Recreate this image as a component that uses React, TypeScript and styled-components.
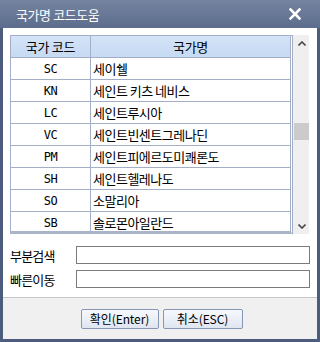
import React from 'react';
import styled, { createGlobalStyle } from 'styled-components';

const GlobalStyle = createGlobalStyle`
  html, body {
    margin: 0;
    padding: 0;
    background: #ffffff;
  }
  * {
    box-sizing: border-box;
  }
`;

const countries = [
  { code: 'SC', name: '세이쉘' },
  { code: 'KN', name: '세인트 키츠 네비스' },
  { code: 'LC', name: '세인트루시아' },
  { code: 'VC', name: '세인트빈센트그레나딘' },
  { code: 'PM', name: '세인트피에르도미쾌론도' },
  { code: 'SH', name: '세인트헬레나도' },
  { code: 'SO', name: '소말리아' },
  { code: 'SB', name: '솔로몬아일란드' },
];

const KR = `"Noto Sans CJK KR", "Noto Sans", sans-serif`;

const App = () => {
  return (
    <>
      <GlobalStyle />
      <Window>
        <TitleBar>
          <Title>국가명 코드도움</Title>
          <CloseButton aria-label="닫기">
            <svg width="12" height="12" viewBox="0 0 12 12">
              <path d="M1.5 1.5 L10.5 10.5 M10.5 1.5 L1.5 10.5" stroke="#ffffff" strokeWidth="2.6" strokeLinecap="square" />
            </svg>
          </CloseButton>
        </TitleBar>
        <Body>
          <ListArea>
            <Grid>
              <HeadRow>
                <HeadCell $width={80}>국가 코드</HeadCell>
                <HeadCell $last>국가명</HeadCell>
              </HeadRow>
              {countries.map((c) => (
                <Row key={c.code}>
                  <CodeCell>{c.code}</CodeCell>
                  <NameCell>{c.name}</NameCell>
                </Row>
              ))}
            </Grid>
            <ScrollBar>
              <ArrowBox>
                <svg width="8" height="5" viewBox="0 0 8 5">
                  <path d="M0.5 4.5 L4 1 L7.5 4.5" fill="none" stroke="#4a4a4a" strokeWidth="1.6" />
                </svg>
              </ArrowBox>
              <Track>
                <Thumb />
              </Track>
              <ArrowBox>
                <svg width="8" height="5" viewBox="0 0 8 5">
                  <path d="M0.5 0.5 L4 4 L7.5 0.5" fill="none" stroke="#4a4a4a" strokeWidth="1.6" />
                </svg>
              </ArrowBox>
            </ScrollBar>
          </ListArea>
          <Form>
            <FieldRow>
              <Label>부분검색</Label>
              <TextBox />
            </FieldRow>
            <FieldRow>
              <Label>빠른이동</Label>
              <TextBox />
            </FieldRow>
          </Form>
        </Body>
        <Footer>
          <Button $width={78}>확인(Enter)</Button>
          <Button $width={80}>취소(ESC)</Button>
        </Footer>
      </Window>
    </>
  );
};

export default App;

const Window = styled.div`
  width: 320px;
  height: 342px;
  display: flex;
  flex-direction: column;
  background: #4d5c7c;
  padding: 0 3px 3px 3px;
  font-family: ${KR};
  color: #000;
`;

const TitleBar = styled.div`
  height: 28px;
  margin: 0 -3px;
  padding: 0 17px 0 16px;
  display: flex;
  align-items: center;
  justify-content: space-between;
  background: linear-gradient(#74839f, #5d6d8d);
`;

const Title = styled.div`
  color: #ffffff;
  font-size: 13px;
  letter-spacing: -0.4px;
  padding-top: 1px;
`;

const CloseButton = styled.div`
  display: flex;
  align-items: center;
  margin-right: 2px;
`;

const Body = styled.div`
  background: #ffffff;
  padding: 7px 7px 0 7px;
  height: 269px;
  display: flex;
  flex-direction: column;
`;

const ListArea = styled.div`
  display: flex;
  height: 199px;
`;

const Grid = styled.div`
  width: 283px;
  height: 199px;
  overflow: hidden;
  border: 1px solid #a4aec6;
  border-right: 3px double #a4aec6;
  border-bottom: 3px solid #aab4c9;
`;

const HeadRow = styled.div`
  display: flex;
  height: 22px;
  background: linear-gradient(#d4e3f7, #c6daf3);
  border-bottom: 1px solid #a4aec6;
`;

const HeadCell = styled.div<{ $width?: number; $last?: boolean }>`
  ${(p) => (p.$width ? `width: ${p.$width}px; flex: none;` : 'flex: 1;')}
  display: flex;
  align-items: center;
  justify-content: center;
  font-size: 13px;
  letter-spacing: -0.3px;
  ${(p) => (p.$last ? '' : 'border-right: 1px solid #a4aec6;')}
`;

const Row = styled.div`
  display: flex;
  height: 22px;
  flex: none;
  border-bottom: 1px solid #a4aec6;
`;

const CodeCell = styled.div`
  width: 80px;
  flex: none;
  display: flex;
  align-items: center;
  justify-content: center;
  border-right: 1px solid #a4aec6;
  font-family: "DejaVu Sans Mono", "Liberation Mono", monospace;
  font-size: 12px;
  letter-spacing: -0.5px;
`;

const NameCell = styled.div`
  flex: 1;
  display: flex;
  align-items: center;
  padding-left: 2px;
  font-size: 13px;
  letter-spacing: -0.5px;
  white-space: nowrap;
`;

const ScrollBar = styled.div`
  width: 16px;
  height: 199px;
  background: #efefef;
  display: flex;
  flex-direction: column;
`;

const ArrowBox = styled.div`
  height: 16px;
  display: flex;
  align-items: center;
  justify-content: center;
  padding-left: 2px;
`;

const Track = styled.div`
  flex: 1;
  padding-top: 72px;
`;

const Thumb = styled.div`
  margin-left: 1px;
  width: 15px;
  height: 17px;
  background: #cbcbcb;
`;

const Form = styled.div`
  display: flex;
  flex-direction: column;
  gap: 6px;
  padding-top: 12px;
`;

const FieldRow = styled.div`
  display: flex;
  align-items: center;
  height: 18px;
`;

const Label = styled.div`
  width: 66px;
  flex: none;
  font-size: 13px;
  letter-spacing: -0.8px;
`;

const TextBox = styled.div`
  width: 234px;
  height: 18px;
  border: 1px solid #7b7b7b;
  background: #ffffff;
`;

const Footer = styled.div`
  flex: 1;
  background: #f0f0f0;
  border-top: 1px solid #c8c8c8;
  display: flex;
  align-items: center;
  justify-content: center;
  gap: 4px;
  padding-left: 3px;
`;

const Button = styled.div<{ $width: number }>`
  width: ${(p) => p.$width}px;
  height: 20px;
  display: flex;
  align-items: center;
  justify-content: center;
  border: 1px solid #8796b4;
  border-radius: 2px;
  background: linear-gradient(#f6f8fc, #dfe6f1);
  font-size: 12px;
  letter-spacing: -0.1px;
`;
